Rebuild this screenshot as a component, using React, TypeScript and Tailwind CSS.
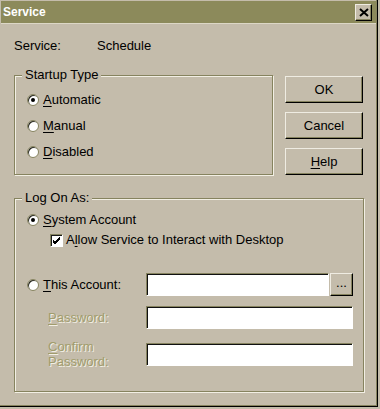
import React from 'react';

const Radio = ({ on }: { on?: boolean }) => (
  <span className="inline-flex items-center justify-center w-[12px] h-[12px] shrink-0 rounded-full bg-white border border-[#86835f] shadow-[inset_1px_1px_0_#2a2a22]">
    {on && <span className="w-[4px] h-[4px] rounded-full bg-black" />}
  </span>
);

const Check = () => (
  <span className="inline-flex items-center justify-center w-[13px] h-[13px] shrink-0 bg-white border-t border-l border-[#86835f] border-r border-b border-r-white border-b-white shadow-[inset_1px_1px_0_#1a1a1a]">
    <svg width="9" height="9" viewBox="0 0 9 9">
      <path d="M1 4 L3 6 L8 1 M1 5 L3 7 L8 2 M1 6 L3 8 L8 3" stroke="#000" strokeWidth="1" fill="none" />
    </svg>
  </span>
);

const Btn = ({ children, className = '' }: { children: React.ReactNode; className?: string }) => (
  <div
    className={`flex items-center justify-center bg-[#c4bcab] border-t border-l border-t-[#efece2] border-l-[#efece2] border-r border-b border-r-black border-b-black shadow-[inset_-1px_-1px_0_#86835f] text-black ${className}`}
  >
    {children}
  </div>
);

const Field = ({ className = '' }: { className?: string }) => (
  <div className={`h-[23px] bg-white border-t border-l border-t-[#86835f] border-l-[#86835f] border-r border-b border-r-white border-b-white shadow-[inset_1px_1px_0_#111] ${className}`} />
);

const U = ({ children }: { children: React.ReactNode }) => <span className="underline underline-offset-2">{children}</span>;

const Dim = ({ children }: { children: React.ReactNode }) => (
  <span className="text-[#a19c6c] [text-shadow:1px_1px_0_#f2efe4]">{children}</span>
);

export default function App() {
  return (
    <div className="w-[380px] h-[409px] bg-[#c4bcab] font-['Liberation_Sans',Arial,sans-serif] text-[13px] leading-[16px] text-black overflow-hidden">
      <div className="w-[378px] h-[407px] border-r border-b border-black shadow-[inset_-1px_-1px_0_#86835f]">
        {/* title bar */}
        <div className="h-[24px] mx-[1px] pt-[1px] border-b border-[#dcd7c6]">
          <div className="h-[22px] bg-[#8c8a5b] flex items-center justify-between pl-[2px] pr-[4px]">
            <span className="text-white font-bold text-[12px]">Service</span>
            <Btn className="w-[17px] h-[17px]">
              <svg width="10" height="9" viewBox="0 0 10 9">
                <path d="M1 1 L9 8 M9 1 L1 8" stroke="#000" strokeWidth="2" fill="none" />
              </svg>
            </Btn>
          </div>
        </div>

        <div className="px-[14px]">
          <div className="mt-[14px] flex h-[16px]">
            <span className="w-[83px]">Service:</span>
            <span>Schedule</span>
          </div>

          <div className="mt-[13px] flex">
            <fieldset className="w-[260px] h-[108px] border border-[#86835f] shadow-[inset_1px_1px_0_#f2efe4,1px_1px_0_#f2efe4]">
              <legend className="ml-[7px] px-[3px] bg-[#c4bcab] leading-[16px]">Startup Type</legend>
              <div className="pt-[4px] pl-[12px] flex flex-col">
                <div className="h-[26px] flex items-center gap-[4px]">
                  <Radio on />
                  <span><U>A</U>utomatic</span>
                </div>
                <div className="h-[26px] flex items-center gap-[4px]">
                  <Radio />
                  <span><U>M</U>anual</span>
                </div>
                <div className="h-[26px] flex items-center gap-[4px]">
                  <Radio />
                  <span><U>D</U>isabled</span>
                </div>
              </div>
            </fieldset>

            <div className="ml-[12px] mt-[9px] flex flex-col gap-[9px]">
              <Btn className="w-[78px] h-[27px]">OK</Btn>
              <Btn className="w-[78px] h-[27px]">Cancel</Btn>
              <Btn className="w-[78px] h-[27px]"><span><U>H</U>elp</span></Btn>
            </div>
          </div>

          <fieldset className="mt-[15px] w-[350px] h-[202px] border border-[#86835f] shadow-[inset_1px_1px_0_#f2efe4,1px_1px_0_#f2efe4]">
            <legend className="ml-[7px] px-[3px] bg-[#c4bcab] leading-[16px]">Log On As:</legend>
            <div className="pt-[4px] pl-[12px] flex flex-col">
              <div className="h-[20px] flex items-center gap-[4px]">
                <Radio on />
                <span><U>S</U>ystem Account</span>
              </div>
              <div className="h-[20px] flex items-center gap-[3px] pl-[23px]">
                <Check />
                <span>A<U>l</U>low Service to Interact with Desktop</span>
              </div>

              <div className="mt-[23px] flex items-center">
                <div className="w-[119px] flex items-center gap-[4px]">
                  <Radio />
                  <span><U>T</U>his Account:</span>
                </div>
                <Field className="w-[183px]" />
                <Btn className="w-[23px] h-[23px] ml-[1px]"><span className="-mt-[4px]">...</span></Btn>
              </div>

              <div className="mt-[10px] flex items-center">
                <div className="w-[119px] pl-[21px]">
                  <Dim><U>P</U>assword:</Dim>
                </div>
                <Field className="w-[207px]" />
              </div>

              <div className="mt-[10px] flex items-center">
                <div className="w-[119px] pl-[21px] leading-[15px]">
                  <Dim><U>C</U>onfirm<br />Password:</Dim>
                </div>
                <Field className="w-[207px]" />
              </div>
            </div>
          </fieldset>
        </div>
      </div>
    </div>
  );
}
